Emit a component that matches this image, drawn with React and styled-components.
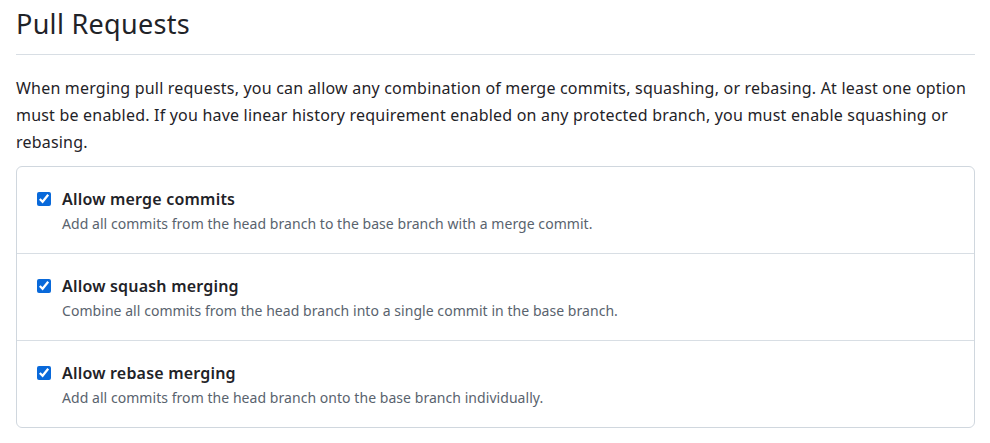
import styled, { createGlobalStyle } from "styled-components";

const GlobalStyle = createGlobalStyle`
    body {
        margin: 0;
        background: #fff;
        font-family: "Noto Sans", "Open Sans", sans-serif;
        color: #1f2328;
    }
`

const options = [
    {
        id: "merge",
        title: "Allow merge commits",
        description: "Add all commits from the head branch to the base branch with a merge commit."
    },
    {
        id: "squash",
        title: "Allow squash merging",
        description: "Combine all commits from the head branch into a single commit in the base branch."
    },
    {
        id: "rebase",
        title: "Allow rebase merging",
        description: "Add all commits from the head branch onto the base branch individually."
    }
]

export default function App() {
    return (
        <Page>
            <GlobalStyle />
            <Subhead>
                <Heading>Pull Requests</Heading>
            </Subhead>
            <Intro>
                When merging pull requests, you can allow any combination of merge commits, squashing, or rebasing. At least one option must be enabled. If you have linear history requirement enabled on any protected branch, you must enable squashing or rebasing.
            </Intro>
            <Box>
                {options.map(option => (
                    <Row key={option.id}>
                        <Checkbox type="checkbox" id={option.id} defaultChecked />
                        <RowText>
                            <Title htmlFor={option.id}>{option.title}</Title>
                            <Description>{option.description}</Description>
                        </RowText>
                    </Row>
                ))}
            </Box>
        </Page>
    )
}

const Page = styled.div`
    padding: 0 15px 0 16px;
`

const Subhead = styled.div`
    border-bottom: 1px solid #d8dee4;
    padding: 4px 0 11px;
`

const Heading = styled.h2`
    margin: 0;
    font-size: 27px;
    font-weight: 400;
    line-height: 39px;
    letter-spacing: 0.3px;
`

const Intro = styled.p`
    margin: 20px 0 10px;
    font-size: 16px;
    line-height: 27px;
    letter-spacing: 0.2px;
`

const Box = styled.div`
    border: 1px solid #d0d7de;
    border-radius: 6px;
`

const Row = styled.div`
    display: flex;
    align-items: flex-start;
    gap: 11px;
    padding: 20px 21px 0 20px;
    height: 66px;

    & + & {
        border-top: 1px solid #d8dee4;
    }
`

const Checkbox = styled.input`
    margin: 5px 0 0;
    width: 14px;
    height: 14px;
    accent-color: #0969da;
    flex-shrink: 0;
`

const RowText = styled.div`
    display: flex;
    flex-direction: column;
`

const Title = styled.label`
    font-size: 16px;
    font-weight: 600;
    line-height: 24px;
    letter-spacing: 0.2px;
`

const Description = styled.p`
    margin: 2px 0 0;
    font-size: 14px;
    line-height: 21px;
    letter-spacing: 0.05px;
    color: #59636e;
`
